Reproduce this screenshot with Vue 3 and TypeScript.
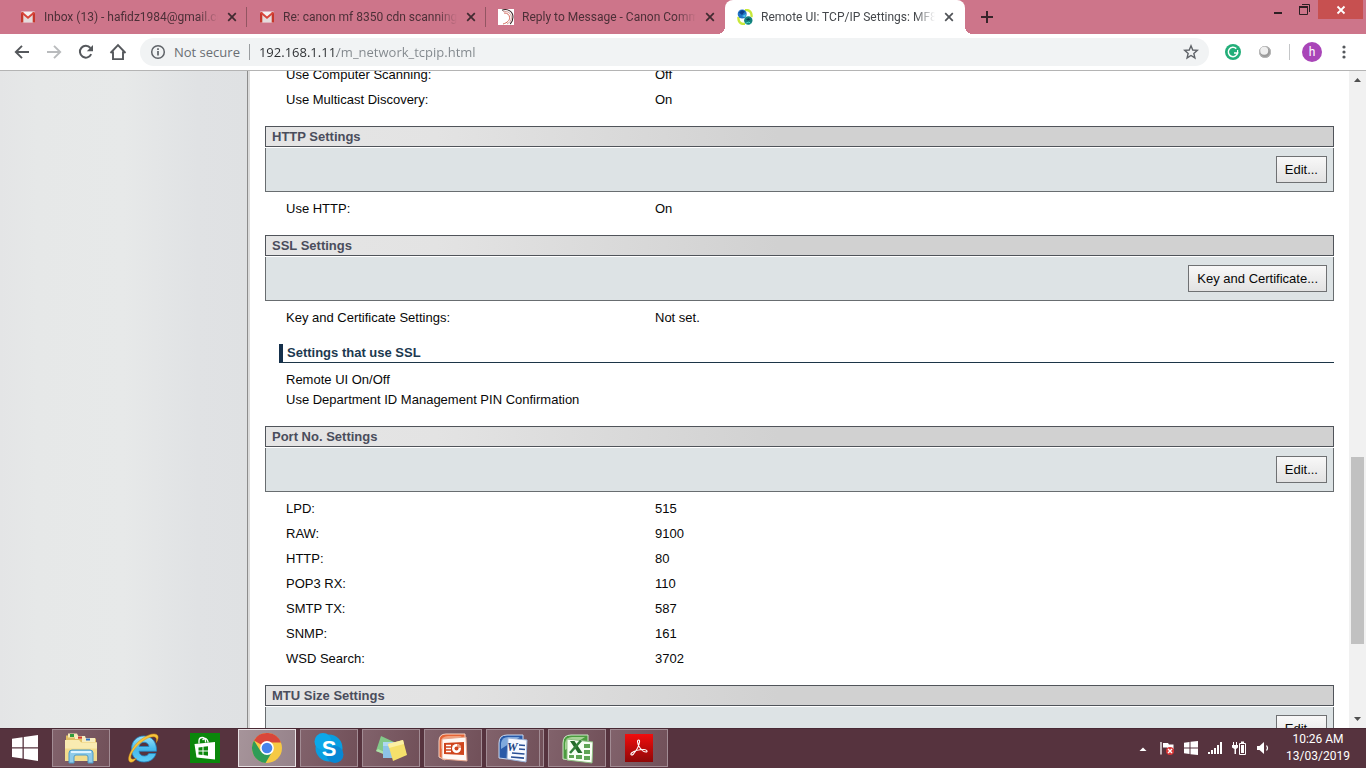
<script setup lang="ts">
interface Tab {
  icon: 'mail' | 'canon' | 'remote'
  title: string
  active?: boolean
}
interface Row {
  label: string
  value: string
}
interface Section {
  title: string
  button: string
  rows: Row[]
  sub?: { title: string; items: string[] }
}

const tabs: Tab[] = [
  { icon: 'mail', title: 'Inbox (13) - hafidz1984@gmail.com' },
  { icon: 'mail', title: 'Re: canon mf 8350 cdn scanning' },
  { icon: 'canon', title: 'Reply to Message - Canon Community' },
  { icon: 'remote', title: 'Remote UI: TCP/IP Settings: MF8300', active: true },
]

const leading: Row[] = [
  { label: 'Use Computer Scanning:', value: 'Off' },
  { label: 'Use Multicast Discovery:', value: 'On' },
]

const sections: Section[] = [
  { title: 'HTTP Settings', button: 'Edit...', rows: [{ label: 'Use HTTP:', value: 'On' }] },
  {
    title: 'SSL Settings',
    button: 'Key and Certificate...',
    rows: [{ label: 'Key and Certificate Settings:', value: 'Not set.' }],
    sub: {
      title: 'Settings that use SSL',
      items: ['Remote UI On/Off', 'Use Department ID Management PIN Confirmation'],
    },
  },
  {
    title: 'Port No. Settings',
    button: 'Edit...',
    rows: [
      { label: 'LPD:', value: '515' },
      { label: 'RAW:', value: '9100' },
      { label: 'HTTP:', value: '80' },
      { label: 'POP3 RX:', value: '110' },
      { label: 'SMTP TX:', value: '587' },
      { label: 'SNMP:', value: '161' },
      { label: 'WSD Search:', value: '3702' },
    ],
  },
  { title: 'MTU Size Settings', button: 'Edit...', rows: [] },
]
</script>

<template>
  <div class="screen">
    <header class="tabstrip">
      <div v-for="(tab, i) in tabs" :key="i" class="tab" :class="{ active: tab.active }">
        <svg v-if="tab.icon === 'mail'" class="favicon" viewBox="0 0 16 16" aria-hidden="true">
          <rect x="1" y="2.500" width="14" height="11" rx="1" fill="#f4efef" />
          <path d="M3 13V5l5 4 5-4v8z" fill="#e4dcdc" />
          <path d="M1 13.500V3.500L3.300 3v10.500zM15 13.500V3.500L12.700 3v10.500z" fill="#c5362b" />
          <path d="M1.800 3.500 8 8.800l6.200-5.300" fill="none" stroke="#d8453a" stroke-width="2" />
        </svg>
        <svg v-else-if="tab.icon === 'canon'" class="favicon" viewBox="0 0 16 16" aria-hidden="true">
          <rect width="16" height="16" fill="#fff" />
          <path d="M4 1.200C10-1 15 3 15 8c0 3-1.200 5.400-2.800 7" fill="none" stroke="#3a2528" stroke-width="1.100" />
          <path d="M5 2.600c5-1 8.400 2 8.400 5.900 0 3-2 5.500-4.500 6.500" fill="none" stroke="#c98a86" stroke-width=".8" />
          <path d="M6 4c3.500-.3 5.600 2 5.600 4.700S9.600 13.600 5 15" fill="none" stroke="#cf5a4b" stroke-width=".9" />
        </svg>
        <svg v-else class="favicon" viewBox="0 0 16 16" aria-hidden="true">
          <path d="M8 1c5-.5 7 3 6.500 7M8 15C3 15.500 1 12 1.500 8" fill="none" stroke="#c8e83a" stroke-width="2.400" />
          <circle cx="5.200" cy="5" r="4.500" fill="#2173c4" />
          <path d="M2 3.500 5 1l3 1.500L5 6z" fill="#0c3f8d" />
          <path d="M5 7 9 5 8 8.500z" fill="#49c4ea" />
          <circle cx="11.300" cy="11.500" r="4.200" fill="#12807c" />
          <path d="M9 10.500 11.500 9l2 1.500-2.500 1z" fill="#063f57" />
          <path d="M8 14.500 12 13l1.500 1.500" fill="none" stroke="#4ad5c4" />
        </svg>
        <span class="tab-title">{{ tab.title }}</span>
        <button class="tab-close" :aria-label="'Close ' + tab.title">
          <svg viewBox="0 0 10 10" width="10" height="10"><path d="M1.200 1.200 8.800 8.800M8.800 1.200 1.200 8.800" stroke="currentColor" stroke-width="1.700" /></svg>
        </button>
      </div>
      <button class="new-tab" aria-label="New tab">
        <svg viewBox="0 0 12 12" width="12" height="12"><path d="M6 0v12M0 6h12" stroke="#38242a" stroke-width="2" /></svg>
      </button>
      <div class="window-buttons">
        <button class="win-btn" aria-label="Minimize">
          <svg viewBox="0 0 12 12" width="12" height="12"><path d="M2 9h8" stroke="#2d1f23" stroke-width="2" /></svg>
        </button>
        <button class="win-btn" aria-label="Restore">
          <svg viewBox="0 0 12 12" width="12" height="12" fill="none" stroke="#2d1f23"><path d="M3 .5h7.500V8" /><path d="M.5 3v7.500h8V3z" /><path d="M0 3h9" stroke-width="2" /></svg>
        </button>
        <button class="win-close" aria-label="Close window">
          <svg viewBox="0 0 10 10" width="10" height="10"><path d="M1.500 1.500 8.500 8.500M8.500 1.500 1.500 8.500" stroke="#fff" stroke-width="1.800" /></svg>
        </button>
      </div>
    </header>

    <nav class="toolbar" aria-label="Browser toolbar">
      <button class="nav-btn" aria-label="Back">
        <svg viewBox="0 0 16 16" width="16" height="16" fill="none" stroke="#55585c" stroke-width="1.900"><path d="M15 8H2M8 1.800 1.800 8 8 14.200" /></svg>
      </button>
      <button class="nav-btn" aria-label="Forward">
        <svg viewBox="0 0 16 16" width="16" height="16" fill="none" stroke="#b9bbbd" stroke-width="1.900"><path d="M1 8h13M8 1.800 14.200 8 8 14.200" /></svg>
      </button>
      <button class="nav-btn" aria-label="Reload">
        <svg viewBox="0 0 16 16" width="16" height="16"><path d="M13.200 10.200A5.900 5.900 0 1 1 12.400 4" fill="none" stroke="#55585c" stroke-width="2" /><path d="M15 1v6.200H8.800z" fill="#55585c" /></svg>
      </button>
      <button class="nav-btn" aria-label="Home">
        <svg viewBox="0 0 18 18" width="18" height="18" fill="none" stroke="#55585c" stroke-width="1.900"><path d="M1.500 10 9 2.200l7.500 7.800M4 8.500v7.600h10V8.500" /></svg>
      </button>
      <div class="omnibox">
        <svg viewBox="0 0 16 16" width="16" height="16" aria-hidden="true"><circle cx="8" cy="8" r="6.300" fill="none" stroke="#5f6368" stroke-width="1.500" /><path d="M8 7v4.500M8 4.300v1.700" stroke="#5f6368" stroke-width="1.700" /></svg>
        <label class="secure" for="address">Not secure</label>
        <input id="address" class="address" type="text" value="192.168.1.11/m_network_tcpip.html" spellcheck="false" />
        <button class="star" aria-label="Bookmark this page">
          <svg viewBox="0 0 16 16" width="16" height="16"><path d="m8 1.800 1.750 4.200 4.550.4-3.450 3 1.050 4.500L8 11.500l-3.900 2.400 1.050-4.500-3.450-3 4.550-.4z" fill="none" stroke="#5f6368" stroke-width="1.400" /></svg>
        </button>
      </div>
      <div class="extensions">
        <button class="ext" aria-label="Grammarly">
          <svg viewBox="0 0 16 16" width="16" height="16"><circle cx="8" cy="8" r="8" fill="#23ae79" /><path d="M11.300 4.600A4.700 4.700 0 1 0 12.600 9H9" fill="none" stroke="#fff" stroke-width="1.500" /><path d="M12.600 6v3.500" stroke="#fff" stroke-width="1.200" /></svg>
        </button>
        <button class="ext" aria-label="Extension">
          <svg viewBox="0 0 16 16" width="16" height="16"><circle cx="8" cy="8" r="6" fill="#9a9a9a" /><circle cx="8" cy="8" r="5.500" fill="none" stroke="#b8b8b8" /><circle cx="7.200" cy="6.800" r="4" fill="#efefef" /></svg>
        </button>
        <span class="divider"></span>
        <button class="avatar" aria-label="Profile">h</button>
        <button class="ext" aria-label="Menu">
          <svg viewBox="0 0 16 16" width="16" height="16" fill="#55585c"><circle cx="8" cy="3" r="1.600" /><circle cx="8" cy="8" r="1.600" /><circle cx="8" cy="13" r="1.600" /></svg>
        </button>
      </div>
    </nav>

    <div class="viewport">
      <aside class="side"></aside>
      <main class="page">
        <div class="scrolled">
          <table class="rows">
            <tbody>
              <tr v-for="row in leading" :key="row.label">
                <th scope="row">{{ row.label }}</th>
                <td>{{ row.value }}</td>
              </tr>
            </tbody>
          </table>
          <section v-for="section in sections" :key="section.title" class="section">
            <h2>{{ section.title }}</h2>
            <div class="actions"><button class="edit">{{ section.button }}</button></div>
            <table v-if="section.rows.length" class="rows">
              <tbody>
                <tr v-for="row in section.rows" :key="row.label">
                  <th scope="row">{{ row.label }}</th>
                  <td>{{ row.value }}</td>
                </tr>
              </tbody>
            </table>
            <div v-if="section.sub" class="sub">
              <h3>{{ section.sub.title }}</h3>
              <ul>
                <li v-for="item in section.sub.items" :key="item">{{ item }}</li>
              </ul>
            </div>
          </section>
        </div>
      </main>
      <div class="scrollbar" aria-hidden="true">
        <svg viewBox="0 0 17 17" width="17" height="17"><path d="M5 11h7L8.500 7z" fill="#505050" /></svg>
        <div class="track">
          <span class="above"></span>
          <span class="thumb"></span>
          <span class="below"></span>
        </div>
        <svg viewBox="0 0 17 17" width="17" height="17"><path d="M5 6h7l-3.500 4z" fill="#505050" /></svg>
      </div>
    </div>

    <footer class="taskbar">
      <button class="start" aria-label="Start">
        <svg viewBox="0 0 26 26" width="26" height="26" fill="#fff"><path d="M0 3.800 10.500 2.200v10H0zM11.800 2 26 0v12.200H11.800zM0 13.500h10.500v10L0 22zM11.800 13.500H26V26l-14.200-2.200z" /></svg>
      </button>
      <button class="task open" aria-label="File Explorer">
        <svg viewBox="0 0 34 32" width="34" height="32">
          <path d="M2 3.500h12l1 3h17V28H2z" fill="#e0bd62" />
          <path d="M4 1.500h9l2 4H4z" fill="#f5e9b5" /><path d="M6 2h4v3H6z" fill="#2f9c3b" />
          <path d="M11 4h10l1 3H11z" fill="#f7edc0" /><path d="M14 4.500h4v2.200h-4z" fill="#cf3b2d" />
          <path d="M18 6h13v4H18z" fill="#f7edc0" /><path d="M22 6.500h4v2h-4z" fill="#2d6fc4" />
          <path d="M1 8h14l2 2.500h16V29H1z" fill="#f3dc8c" />
          <path d="M1 8h14l2 2.500h16v6H1z" fill="#f9ebb1" />
          <path d="M5 31V21q0-3 3-3h18q3 0 3 3v10h-5v-6q0-2-2-2H12q-2 0-2 2v6z" fill="#8fcbe9" stroke="#4c9bc8" />
          <path d="M7 20h20" stroke="#dff4ff" stroke-width="2" />
        </svg>
      </button>
      <button class="task" aria-label="Internet Explorer">
        <svg viewBox="0 0 34 32" width="34" height="32">
          <defs><linearGradient id="globe" x2="0" y2="1"><stop stop-color="#9be4fb" /><stop offset=".5" stop-color="#45b8ec" /><stop offset="1" stop-color="#5fcdf5" /></linearGradient></defs>
          <path fill-rule="evenodd" d="M18 4C10.500 4 5.500 9.500 5.500 17S10.500 30 18 30c6 0 10.500-3.300 12-8.500h-7.200c-1 1.800-2.500 2.500-4.600 2.500-3 0-5-1.800-5.200-4.800h17.500C31 10.500 26 4 18 4zm-5 10.500c.5-2.700 2.400-4.300 5-4.300s4.600 1.600 5 4.300z" fill="url(#globe)" stroke="#1f86c4" stroke-width=".8" />
          <path d="M7 29.800C-1.500 33 3 16.500 15 7.500 24 .5 33.500 0 32 6.500c-.3 1.300-.8 2.600-1.700 4 .8-3.500.2-5.800-3-5.800C18 4.700 3 20.500 5 26.300c.5 1.400 2.600 1.200 5.300 0-1 1.500-2 2.700-3.300 3.500z" fill="#f7c53a" stroke="#d68f18" stroke-width=".5" />
        </svg>
      </button>
      <button class="task" aria-label="Store">
        <svg viewBox="0 0 30 30" width="30" height="30">
          <rect width="30" height="30" fill="#0b870b" />
          <path d="M9 10.500V8q0-3.500 3.300-3.500 2.700 0 3.200 3v2M12.500 7q4-4 5.800 2.500" fill="none" stroke="#fff" stroke-width="1.300" />
          <path d="m4.500 11 20.500-2v17.500L6.500 24.500z" fill="#fff" />
          <path d="m8.500 14.500 4-.5v3.500h-4zM13.500 13.800l4.500-.6v4.300h-4.500zM8.500 18.500h4V22l-4-.5zM13.500 18.500H18v4.200l-4.500-.6z" fill="#0b870b" />
        </svg>
      </button>
      <button class="task open current" aria-label="Google Chrome">
        <svg viewBox="0 0 32 32" width="32" height="32">
          <circle cx="16" cy="16" r="15" fill="#f6c944" />
          <path d="M16 16 3 8.500A15 15 0 0 1 29.900 10.500H16z" fill="#d9473b" />
          <path d="M3 8.500A15 15 0 0 0 14.500 31L21 20 9.500 19z" fill="#2f9c57" />
          <circle cx="16" cy="16" r="6.900" fill="#fff" /><circle cx="16" cy="16" r="5.300" fill="#4584ec" />
        </svg>
      </button>
      <button class="task open" aria-label="Skype">
        <svg viewBox="0 0 32 32" width="32" height="32">
          <circle cx="16" cy="16" r="13.500" fill="#099ee0" /><circle cx="10" cy="9.500" r="8.500" fill="#0ba8ea" /><circle cx="22" cy="22.500" r="8.500" fill="#0787d4" />
          <text x="16" y="24" text-anchor="middle" class="skype-letter">S</text>
        </svg>
      </button>
      <button class="task open" aria-label="Sticky Notes">
        <svg viewBox="0 0 34 30" width="34" height="30">
          <path d="m7 3 13 6-6 13L2 18z" fill="#83c989" /><path d="m4 16 11 5-1 2L2 18z" fill="#aee0a8" />
          <path d="M9 9h14v16H9z" fill="#8dc4e8" /><path d="M9 9h14v4H9z" fill="#aed8f2" />
          <path d="m14 11 15-4 4 15-14 6z" fill="#f5e06b" /><path d="m14 11 15-4 1 4-15 4z" fill="#fbf0a3" />
        </svg>
      </button>
      <button class="task open" aria-label="PowerPoint">
        <svg viewBox="0 0 32 32" width="32" height="32">
          <path d="M2 25V9q0-7 7-7h19v4L8 28z" fill="#e46436" stroke="#f8d4c4" />
          <path d="M4 10q1-6 7-6h14L4 17z" fill="#f4a07b" />
          <path d="m5 7 24-2 1 24-25-2z" fill="#fff8f4" stroke="#e6a58c" />
          <path d="m7 11 20-1v13L7 22z" fill="#cf451d" />
          <path d="M9 13.500h5M9 16.500h5M9 19.500h5" stroke="#fff" stroke-width="1.500" />
          <circle cx="19.500" cy="16.500" r="4.500" fill="#fff" /><path d="M20 16V12a4 4 0 0 1 4 4z" fill="#e9a186" /><circle cx="19.500" cy="16.500" r="2" fill="#cf451d" />
        </svg>
      </button>
      <button class="task open stacked" aria-label="Word">
        <svg viewBox="0 0 32 32" width="32" height="32">
          <path d="M2 26V11q0-8 8-8h16v6L10 27z" fill="#295aa8" stroke="#c9daf2" />
          <path d="M4 11q1-6 7-6h12L4 17z" fill="#7fa9dd" />
          <path d="m11 6 19 2-1 22-19-3z" fill="#f7faff" stroke="#9bb3d9" />
          <path d="m22 13 6 .5M22 17l6 .5M15 21l12.500 1M14 25l13 1.200" stroke="#294f95" stroke-width="1.700" />
          <text x="10" y="19" class="word-letter">W</text>
        </svg>
      </button>
      <button class="task open" aria-label="Excel">
        <svg viewBox="0 0 32 32" width="32" height="32">
          <path d="M2 27V11q0-8 8-8h17v7L9 28z" fill="#4b9b3f" stroke="#cfe8c9" />
          <path d="M4 11q1-6 7-6h13L4 18z" fill="#a7d397" />
          <path d="m6 7 26 3-1 21-25-3z" fill="#f8fff4" stroke="#8dbd80" />
          <path d="M23 12h6v4h-6zM23 18h6v4h-6zM23 24h6v4h-6zM15 23h6v4h-6zM8 23h5v3H8z" fill="#5fa554" />
          <path d="m9 9 4.500 0 8 12h-4.500z" fill="#246b2b" /><path d="M20 8.500 9 21" stroke="#328039" stroke-width="2.500" />
        </svg>
      </button>
      <button class="task open" aria-label="Adobe Reader">
        <svg viewBox="0 0 28 28" width="28" height="28">
          <defs><linearGradient id="reader" x2="0" y2="1"><stop stop-color="#f20d0d" /><stop offset="1" stop-color="#8f0808" /></linearGradient></defs>
          <rect width="28" height="28" fill="url(#reader)" />
          <path d="M12.500 7.500c0-2 2.500-2 2 .5-.5 4-3.500 9-6 12-2 2-3.500.5-2-1C9 17 14 15.500 19 15.500c3 0 4 2.500 2 2.500-4 0-8.500-6.500-8.500-10.500z" fill="none" stroke="#fff" stroke-width="1.100" />
        </svg>
      </button>

      <div class="tray">
        <button class="tray-btn" aria-label="Show hidden icons">
          <svg viewBox="0 0 16 16" width="16" height="16"><path d="M4.500 11h7L8 7.500z" fill="#fff" /></svg>
        </button>
        <button class="tray-btn" aria-label="Action Center">
          <svg viewBox="0 0 16 16" width="16" height="16"><path d="M2 2v12.500" stroke="#fff" stroke-width="1.300" /><path d="M4 3h5l1 1.500h4.500V9H9L8 7.500H4z" fill="#fff" /><circle cx="11" cy="11" r="4" fill="#d93636" /><path d="m9 9 4 4m0-4-4 4" stroke="#fff" stroke-width="1.400" /></svg>
        </button>
        <button class="tray-btn" aria-label="Windows Update">
          <svg viewBox="0 0 16 16" width="16" height="16" fill="#fff"><path d="M1 2.700 6.500 2v5.400H1zM7.500 1.800 15 1v6.400H7.500zM1 8.500h5.500V14L1 13.200zM7.500 8.500H15V15l-7.500-.8z" /></svg>
        </button>
        <button class="tray-btn" aria-label="Network">
          <svg viewBox="0 0 16 16" width="16" height="16" fill="#fff"><path d="M1 12h2v2H1zM4 10h2v4H4zM7 8h2v6H7zM10 5h2v9h-2zM13 2h2v12h-2z" /></svg>
        </button>
        <button class="tray-btn" aria-label="Battery">
          <svg viewBox="0 0 16 16" width="16" height="16"><path d="M2.500 2v4M5.500 2v4" stroke="#fff" /><path d="M1 5h6v2.500L5 9v5H3.500V9L1 7.500z" fill="#fff" /><path d="M8.500 3.500h6v11h-6z" fill="none" stroke="#fff" /><path d="M10 1.500h3V3h-3zM10 5h3v8h-3z" fill="#fff" /></svg>
        </button>
        <button class="tray-btn" aria-label="Volume">
          <svg viewBox="0 0 16 16" width="16" height="16"><path d="M2 6h2.500L9 2v12L4.500 10H2z" fill="#fff" /><path d="M11.500 5.500q2 2.500 0 5" fill="none" stroke="#fff" stroke-width="1.200" /></svg>
        </button>
        <div class="clock"><time>10:26 AM</time><time>13/03/2019</time></div>
      </div>
    </footer>
  </div>
</template>

<style>
body {
  margin: 0;
  overflow: hidden;
}
</style>

<style scoped>
.screen {
  display: flex;
  flex-direction: column;
  height: 100vh;
  overflow: hidden;
  background: #fff;
  font-family: "Liberation Sans", Arial, sans-serif;
  font-size: 13px;
  color: #080808;
}
button {
  padding: 0;
  border: 0;
  background: none;
  font: inherit;
  color: inherit;
}
svg {
  display: block;
  flex: none;
}

/* tab strip */
.tabstrip {
  display: flex;
  flex: none;
  height: 34px;
  padding-left: 8px;
  background: #cd758a;
  font-family: Roboto, "Noto Sans", sans-serif;
  font-size: 12px;
  color: #4c2f37;
}
.tab {
  position: relative;
  display: flex;
  flex: 0 1 239px;
  align-items: center;
  gap: 8px;
  box-sizing: border-box;
  min-width: 0;
  padding: 0 9px 0 12px;
}
.tab:nth-child(-n + 2)::after {
  content: "";
  position: absolute;
  right: 0;
  top: 7px;
  width: 1px;
  height: 20px;
  background: #925562;
}
.favicon {
  width: 16px;
  height: 16px;
}
.tab-title {
  flex: 1;
  min-width: 0;
  overflow: hidden;
  white-space: nowrap;
  line-height: 20px;
  mask-image: linear-gradient(90deg, #000 calc(100% - 20px), transparent);
}
.tab-close {
  display: grid;
  place-items: center;
  width: 12px;
  height: 16px;
  color: #402a30;
}
.tab.active {
  flex-basis: 240px;
  padding-right: 10px;
  border-radius: 8px 8px 0 0;
  background: #fff;
  color: #45484c;
}
.tab.active .tab-close {
  color: #505357;
}
.tab.active::before,
.tab.active::after {
  content: "";
  position: absolute;
  bottom: 0;
  width: 8px;
  height: 8px;
}
.tab.active::before {
  right: 100%;
  background: radial-gradient(circle at 0 0, transparent 8px, #fff 8px);
}
.tab.active::after {
  left: 100%;
  background: radial-gradient(circle at 100% 0, transparent 8px, #fff 8px);
}
.new-tab {
  display: grid;
  place-items: center;
  width: 28px;
  margin-left: 8px;
}
.window-buttons {
  display: flex;
  align-items: flex-start;
  margin: 0 3px 0 auto;
}
.win-btn {
  display: grid;
  place-items: center;
  width: 27px;
  height: 19px;
}
.win-close {
  display: grid;
  place-items: center;
  width: 45px;
  height: 19px;
  background: #c75050;
}

/* toolbar */
.toolbar {
  display: flex;
  flex: none;
  align-items: center;
  height: 36px;
  padding-left: 6px;
  border-bottom: 1px solid #b4b4b4;
  background: #fff;
  font-family: "Open Sans", "Noto Sans", sans-serif;
  font-size: 13px;
}
.nav-btn {
  display: grid;
  flex: none;
  place-items: center;
  width: 32px;
  height: 32px;
}
.omnibox {
  display: flex;
  flex: 1;
  align-items: center;
  box-sizing: border-box;
  height: 28px;
  margin-left: 6px;
  padding: 0 10px;
  border-radius: 14px;
  background: #f1f3f4;
}
.secure {
  margin-left: 8px;
  padding-right: 9px;
  border-right: 1px solid #9a9da0;
  line-height: 16px;
  color: #6a6e73;
}
.address {
  flex: 1;
  min-width: 0;
  margin-left: 9px;
  padding: 0;
  border: 0;
  outline: 0;
  background: linear-gradient(90deg, #2a2c2f 78px, #80868b 78px);
  background-clip: text;
  color: transparent;
  font: inherit;
  line-height: 20px;
}
.extensions {
  display: flex;
  flex: none;
  align-items: center;
  padding-right: 6px;
  margin-left: 8px;
}
.ext {
  display: grid;
  place-items: center;
  width: 32px;
  height: 28px;
}
.divider {
  width: 1px;
  height: 16px;
  margin: 0 12px 0 8px;
  background: #c4c6c8;
}
.avatar {
  width: 20px;
  height: 20px;
  margin-right: 6px;
  border-radius: 50%;
  background: #a945b8;
  color: #fff;
  font-family: Roboto, sans-serif;
  font-size: 12px;
  line-height: 20px;
}

/* page */
.viewport {
  display: flex;
  flex: 1;
  min-height: 0;
}
.side {
  flex: none;
  width: 247px;
  border-right: 1px solid #8c8c8c;
  background: linear-gradient(90deg, #e4e5e6, #e6e8e8 15%, #e7e9e9 50%, #e0e2e4 80%, #dfe1e3);
}
.page {
  flex: 1;
  min-width: 0;
  overflow: hidden;
  padding: 0 15px;
  border-left: 2px solid #dcdcdc;
}
.scrolled {
  margin-top: -9px;
}
.rows {
  width: 100%;
  padding-left: 21px;
  border-collapse: separate;
  border-spacing: 0;
  table-layout: fixed;
}
.rows th,
.rows td {
  height: 25px;
  padding: 0;
  line-height: 25px;
  text-align: left;
  font-weight: 400;
}
.rows th {
  width: 369px;
}
.section {
  margin-top: 14px;
}
.section h2 {
  box-sizing: border-box;
  height: 21px;
  margin: 0 0 1px;
  padding-left: 6px;
  border: 1px solid #50545a;
  background: linear-gradient(90deg, #e5e5e5 0, #e3e3e3 16%, #d1d1d1 48%, #d1d1d1);
  font-size: 13px;
  line-height: 19px;
  color: #4a4d5c;
}
.actions {
  display: flex;
  justify-content: flex-end;
  box-sizing: border-box;
  height: 44px;
  margin-bottom: 4px;
  padding: 8px 6px 0 0;
  border: solid #686d70;
  border-width: 0 1px 1px;
  background: #dde3e5;
}
.edit {
  height: 27px;
  padding: 0 8px;
  border: 1px solid #6f7173;
  background: linear-gradient(#f8f8f8, #e2e2e2);
}
.sub {
  margin: 14px 0 16px 14px;
}
.sub h3 {
  box-sizing: border-box;
  height: 19px;
  margin: 0 0 7px;
  padding-left: 4px;
  border-left: 4px solid #15304b;
  border-bottom: 1px solid #1c3547;
  font-size: 13px;
  line-height: 18px;
  color: #1c3950;
}
.sub ul {
  margin: 0;
  padding-left: 7px;
  list-style: none;
  line-height: 20px;
}

.scrollbar {
  display: flex;
  flex: none;
  flex-direction: column;
  width: 17px;
  background: #f1f1f1;
}
.track {
  display: flex;
  flex: 1;
  flex-direction: column;
  padding: 0 2px;
}
.above {
  flex: 369;
}
.thumb {
  flex: 187;
  background: #c1c1c1;
}
.below {
  flex: 67;
}

/* taskbar */
.taskbar {
  display: flex;
  flex: none;
  align-items: center;
  gap: 4px;
  height: 40px;
  background: #56333e;
  box-shadow: inset 0 1px #482934;
}
.start {
  display: grid;
  place-items: center;
  box-sizing: border-box;
  width: 48px;
  height: 40px;
  padding-left: 2px;
}
.task {
  display: grid;
  flex: none;
  place-items: center;
  box-sizing: border-box;
  width: 58px;
  height: 38px;
}
.task.open {
  border: 1px solid #a28c94;
  background: linear-gradient(100deg, #81626b, #715059);
}
.task.current {
  border-color: #e8e1e4;
  background: linear-gradient(100deg, #a6949a, #96828a);
}
.task.stacked {
  padding-right: 4px;
  background: linear-gradient(#a28c94, #a28c94) right 3px top / 1px 100% no-repeat, linear-gradient(100deg, #81626b, #715059);
}
.skype-letter {
  font: 700 22px "Liberation Sans", Arial, sans-serif;
  fill: #fff;
}
.word-letter {
  font: italic 700 12px "Liberation Serif", serif;
  fill: #20427f;
}
.tray {
  display: flex;
  align-items: center;
  margin: 0 15px 0 auto;
}
.tray-btn {
  display: grid;
  place-items: center;
  width: 24px;
  height: 40px;
}
.clock {
  display: flex;
  flex-direction: column;
  align-items: center;
  width: 66px;
  margin-left: 10px;
  font-family: Roboto, "Noto Sans", sans-serif;
  font-size: 12px;
  line-height: 17px;
  color: #fff;
}
</style>
